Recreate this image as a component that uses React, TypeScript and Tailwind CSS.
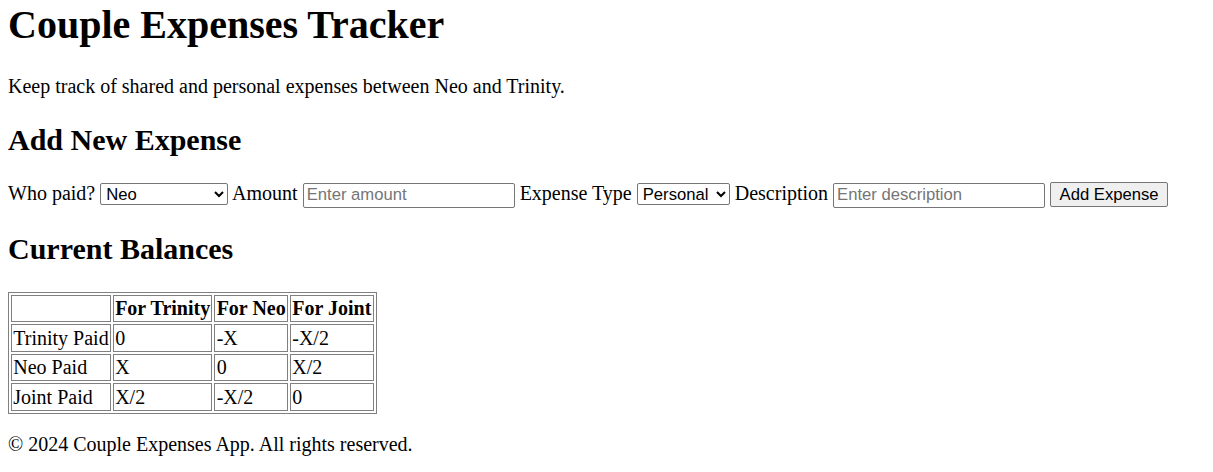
import React from "react";

const cell = "border border-[#808080] px-[1.25px] py-[1.25px] align-middle leading-[23px]";
const field =
  "border border-[#767676] rounded-[2px] bg-white font-['Liberation_Sans',Arial,sans-serif] text-[16.67px] text-black placeholder:text-[#757575] align-baseline";

export default function App() {
  return (
    <div className="px-2 pt-[2px] font-['Liberation_Serif','Times_New_Roman',serif] text-[20px] leading-[23px] text-black bg-white">
      <h1 className="text-[40px] leading-[46px] font-bold mt-0 mb-[26.8px]">Couple Expenses Tracker</h1>
      <p className="my-5">Keep track of shared and personal expenses between Neo and Trinity.</p>

      <h2 className="text-[30px] leading-[34.5px] font-bold my-[24.9px]">Add New Expense</h2>
      <form className="mb-5" onSubmit={(e) => e.preventDefault()}>
        <label>Who paid? </label>
        <select className={field + " w-[128px] h-[22px] px-[1px]"} defaultValue="Neo">
          <option>Neo</option>
          <option>Trinity</option>
          <option>Joint</option>
        </select>{" "}
        <label>Amount </label>
        <input className={field + " w-[212px] h-[25px] px-[3px]"} placeholder="Enter amount" />{" "}
        <label>Expense Type </label>
        <select className={field + " w-[93px] h-[22px] px-[1px]"} defaultValue="Personal">
          <option>Personal</option>
          <option>Shared</option>
        </select>{" "}
        <label>Description </label>
        <input className={field + " w-[212px] h-[25px] px-[3px]"} placeholder="Enter description" />{" "}
        <button className="border border-[#767676] rounded-[2px] bg-[#efefef] w-[118px] h-[25px] font-['Liberation_Sans',Arial,sans-serif] text-[16.67px] align-baseline">
          Add Expense
        </button>
      </form>

      <h2 className="text-[30px] leading-[34.5px] font-bold my-[24.9px]">Current Balances</h2>
      <table className="border border-[#808080] border-separate border-spacing-[2.5px]">
        <thead>
          <tr>
            <th className={cell}></th>
            <th className={cell}>For Trinity</th>
            <th className={cell}>For Neo</th>
            <th className={cell}>For Joint</th>
          </tr>
        </thead>
        <tbody>
          <tr>
            <td className={cell}>Trinity Paid</td>
            <td className={cell}>0</td>
            <td className={cell}>-X</td>
            <td className={cell}>-X/2</td>
          </tr>
          <tr>
            <td className={cell}>Neo Paid</td>
            <td className={cell}>X</td>
            <td className={cell}>0</td>
            <td className={cell}>X/2</td>
          </tr>
          <tr>
            <td className={cell}>Joint Paid</td>
            <td className={cell}>X/2</td>
            <td className={cell}>-X/2</td>
            <td className={cell}>0</td>
          </tr>
        </tbody>
      </table>

      <footer>
        <p className="mt-[19px] mb-5">© 2024 Couple Expenses App. All rights reserved.</p>
      </footer>
    </div>
  );
}
